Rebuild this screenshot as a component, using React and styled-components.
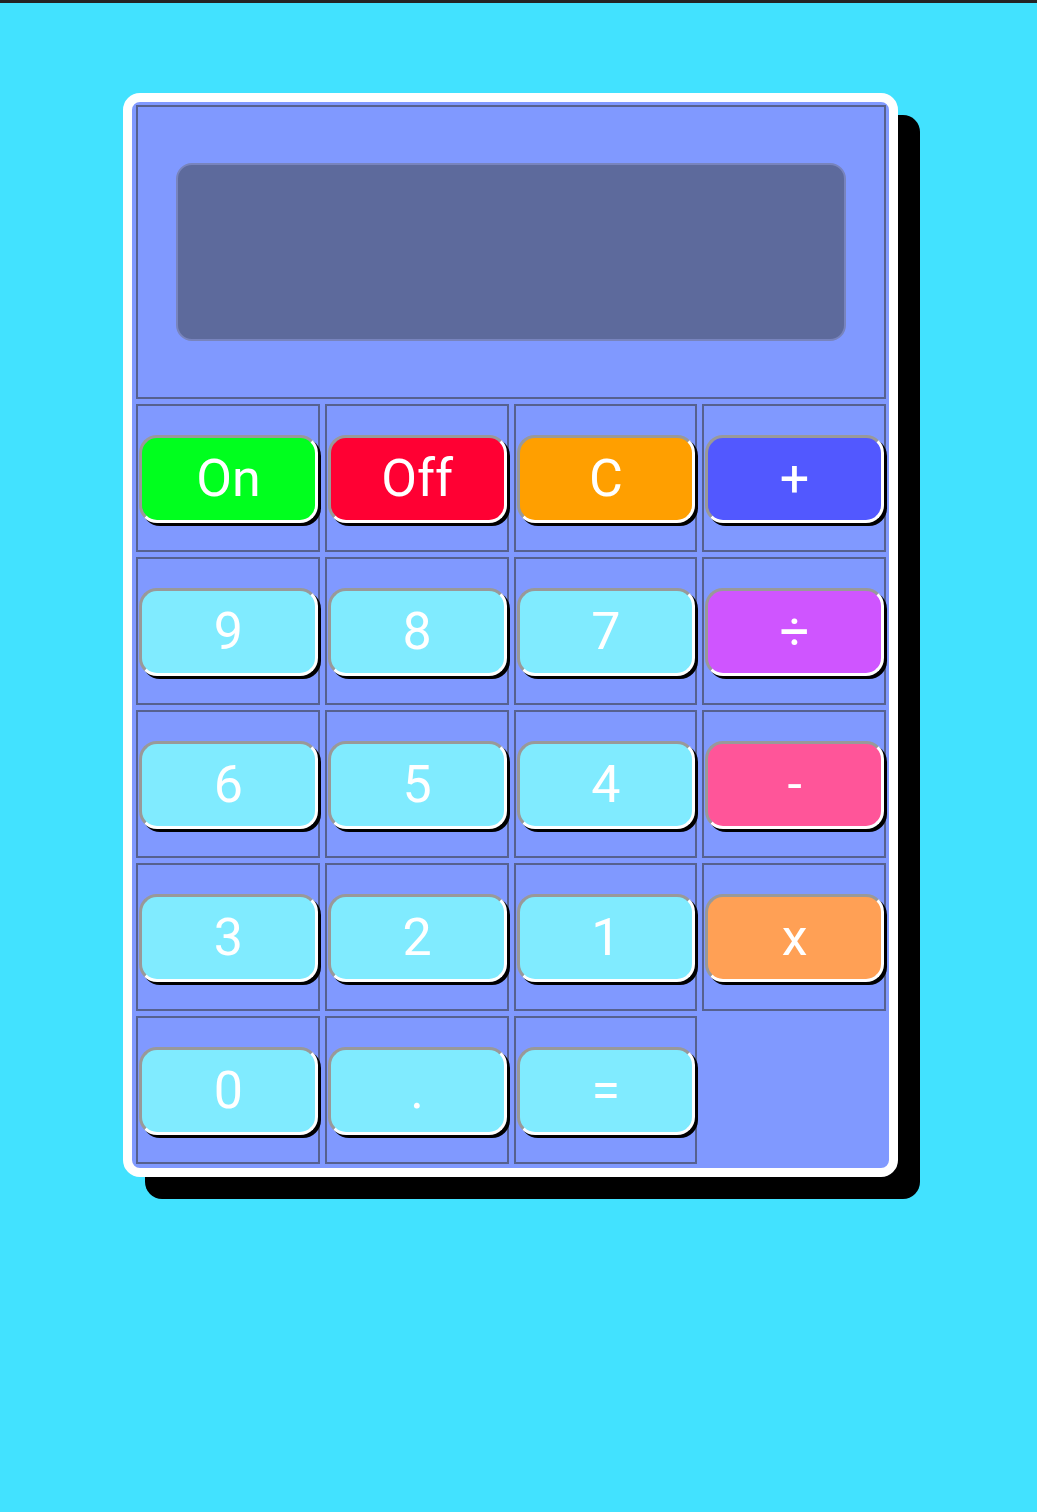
import React from "react";
import styled, { createGlobalStyle } from "styled-components";

const GlobalStyle = createGlobalStyle`
  html, body {
    margin: 0;
    padding: 0;
    background: #42e2ff;
    font-family: Roboto, "Liberation Sans", sans-serif;
  }
  * { box-sizing: border-box; }
`;

const TopStrip = styled.div`
  height: 3px;
  background: #232425;
`;

const Page = styled.div`
  min-height: 1509px;
  padding: 90px 0 0 123px;
`;

const Card = styled.div`
  width: 775px;
  border: 9px solid #ffffff;
  border-radius: 17px;
  background: #8099ff;
  box-shadow: 22px 22px 0 #000000;
  padding: 3px 3px 4px 4px;
`;

const Grid = styled.div`
  display: grid;
  grid-template-columns: repeat(4, 1fr);
  grid-template-rows: 294px repeat(5, 148px);
  gap: 5px;
`;

const Cell = styled.div`
  border: 2px solid #56618f;
  display: flex;
  align-items: center;
  padding: 0 0 0 1px;
  ${(p) => (p.$wide ? "grid-column: 1 / -1; justify-content: center; padding: 0;" : "")}
`;

const Screen = styled.div`
  width: 670px;
  height: 178px;
  background: #5d6a9c;
  border: 2px solid #7884bd;
  border-radius: 16px;
`;

const Key = styled.button`
  width: 100%;
  height: 88px;
  margin-top: 2px;
  border-radius: 18px;
  border-style: solid;
  border-width: 3px 3px 3px 3px;
  border-color: #999999 #ffffff #ffffff #999999;
  box-shadow: 3px 3px 0 #000000;
  background: ${(p) => p.$bg};
  color: #ffffff;
  font-family: Roboto, "Liberation Sans", sans-serif;
  font-size: 52px;
  font-weight: 400;
  line-height: 1;
  padding: 0;
  cursor: pointer;
  display: flex;
  align-items: center;
  justify-content: center;
`;

const NUM = "#80ebff";

const keys = [
  ["On", "#00ff1e"],
  ["Off", "#ff0033"],
  ["C", "#ff9f00"],
  ["+", "#5258ff"],
  ["9", NUM],
  ["8", NUM],
  ["7", NUM],
  ["÷", "#cf55ff"],
  ["6", NUM],
  ["5", NUM],
  ["4", NUM],
  ["-", "#ff5599"],
  ["3", NUM],
  ["2", NUM],
  ["1", NUM],
  ["x", "#ffa055"],
  ["0", NUM],
  [".", NUM],
  ["=", NUM],
];

export default function App() {
  return (
    <>
      <GlobalStyle />
      <TopStrip />
      <Page>
        <Card>
          <Grid>
            <Cell $wide>
              <Screen />
            </Cell>
            {keys.map(([label, bg]) => (
              <Cell key={label}>
                <Key $bg={bg}>{label}</Key>
              </Cell>
            ))}
          </Grid>
        </Card>
      </Page>
    </>
  );
}
